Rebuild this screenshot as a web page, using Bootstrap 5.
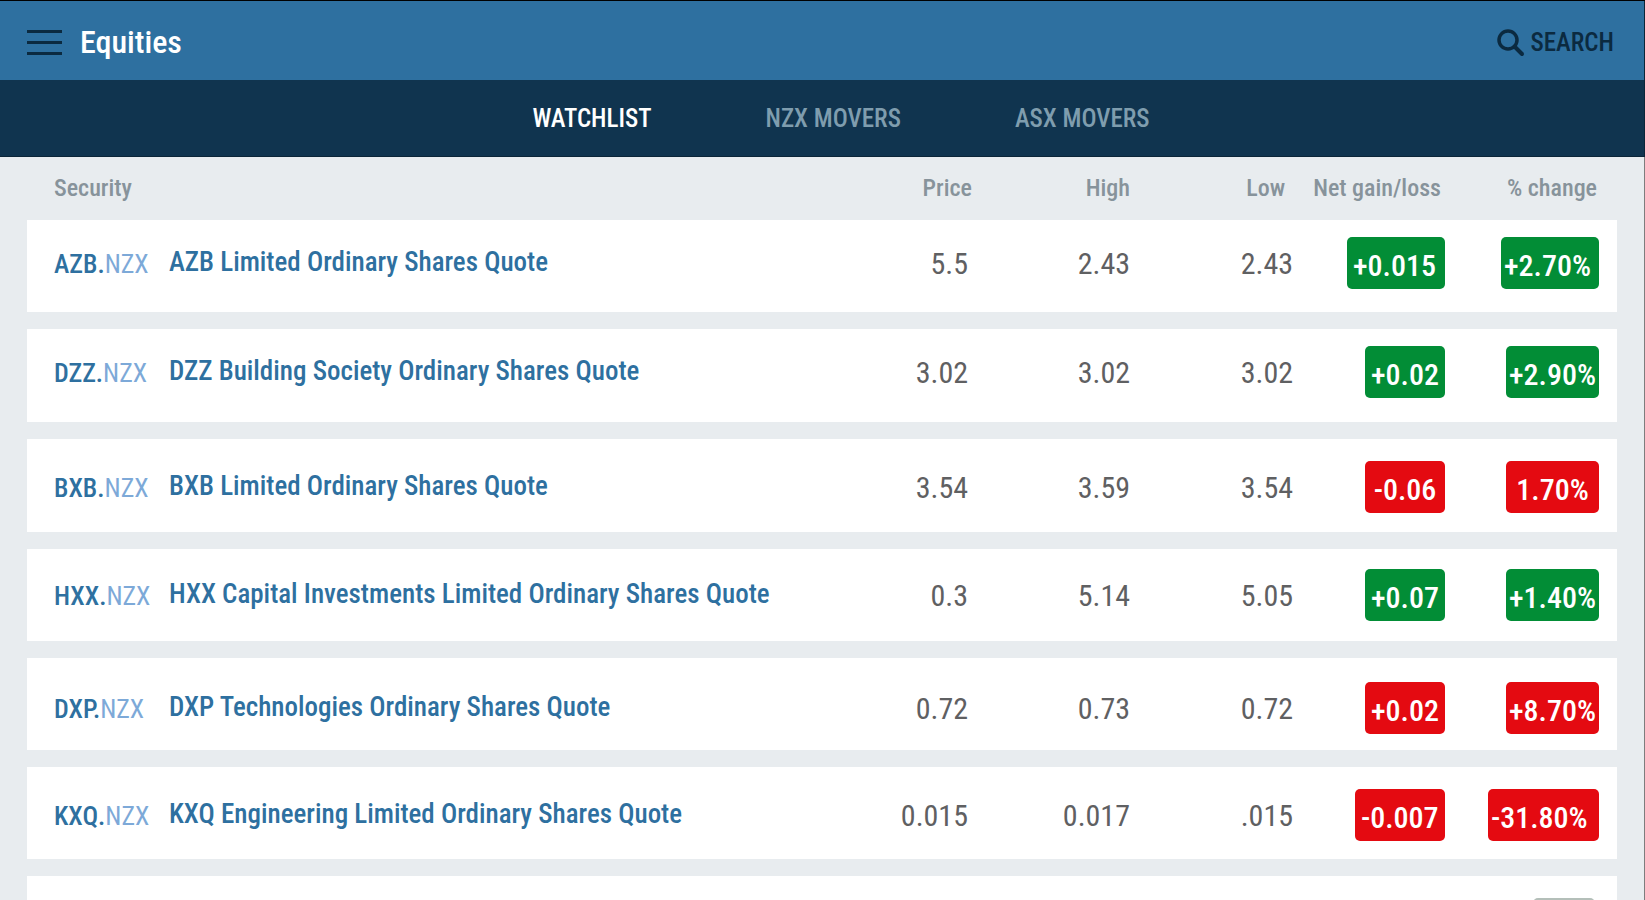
<!DOCTYPE html>
<html lang="en">
<head>
<meta charset="utf-8">
<meta name="viewport" content="width=device-width, initial-scale=1">
<title>Equities</title>
<link href="https://cdn.jsdelivr.net/npm/bootstrap@5.3.0/dist/css/bootstrap.min.css" rel="stylesheet">
<style>
  body {
    background: #e8ecef;
    border-top: 1px solid #000;
    font-family: "Roboto Condensed", "Roboto", "Liberation Sans", sans-serif;
    font-weight: 500;
  }

  /* Top bar */
  .app-bar { background: #2e70a0; height: 79px; padding: 5px 30px 0 27px; color: #0b2a40; border-right: 1px solid #0b2538; }
  .app-title { font-size: 32px; line-height: 36px; padding-bottom: 2px; font-weight: 500; color: #fff; }
  .bar-btn { color: inherit; font-size: 25px; line-height: 28px; font-weight: 500; gap: 6px; }
  .menu-btn { margin-right: 18px; }

  /* Tabs */
  .tab-bar { background: #10344f; height: 77px; gap: 114px; padding: 2px 0 0 38px; font-size: 25px; border-right: 1px solid #0b2538; border-bottom: 1px solid #0b2538; }
  .tab-bar .nav-link { color: #7f9dae; padding: 0; line-height: 28px; }
  .tab-bar .nav-link.active { color: #fff; }

  /* Quotes */
  .quotes { padding: 0 27px; border-right: 1px solid #7d7d7d; scrollbar-width: none; }
  .quote-table { width: 100%; table-layout: fixed; border-collapse: separate; border-spacing: 0 17px; color: #5f6062; }
  .quote-table th, .quote-table td { padding: 0; text-align: right; vertical-align: top; white-space: nowrap; }
  .quote-table th { font-size: 24px; line-height: 29px; font-weight: 500; color: #87939b; }
  .quote-table th:first-child, .quote-table td:first-child { padding-left: 27px; text-align: left; }
  .quote-table td:last-child { padding-right: 18px; }
  .quote-table th:last-child { padding-right: 20px; }
  .quote-table tbody tr { background: #fff; height: 92px; }
  .quote-table tbody tr:nth-child(2), .quote-table tbody tr:nth-child(3) { height: 93px; }
  .quote-table td { padding-top: 17px; font-size: 30px; line-height: 54px; font-weight: 400; }
  .quote-table .drop-sm td { padding-top: 20px; }
  .quote-table .drop-md td { padding-top: 22px; }
  .quote-table .drop-lg td { padding-top: 24px; }
  .col-high { width: 158px; }
  .col-low { width: 163px; }
  .col-net { width: 152px; }
  .col-pct { width: 172px; }
  .quote-table th.label-low { padding-right: 8px; }
  .quote-table td.price, .quote-table th.label-net { padding-right: 4px; }

  .security { gap: 16px; color: #2e70a0; text-decoration: none; font-weight: 500; }
  .ticker { width: 99px; font-size: 26px; line-height: 54px; font-weight: 400; }
  .ticker b { font-weight: 500; }
  .ticker span { color: #7da9d8; }
  .security-name { font-size: 27px; line-height: 50px; font-weight: 500; }

  .chip { display: inline-block; height: 52px; min-width: 80px; padding: 4px 0 0 6px; border-radius: 5px; line-height: 50px; font-weight: 500; color: #fff; text-align: left; vertical-align: top; }
  .chip-mid { min-width: 90px; }
  .chip-pct { min-width: 93px; padding-left: 3px; }
  .chip-wide { min-width: 98px; }
  .chip-xwide { min-width: 111px; }
  .chip-center { padding-left: 0; text-align: center; }
  .chip-up { background: #028d36; }
  .chip-down { background: #e40a11; }
  .chip-flat { background: #b4bfb9; min-width: 62px; margin-right: 4px; }
</style>
</head>
<body class="vh-100 overflow-hidden d-flex flex-column">
<header class="app-bar d-flex align-items-center justify-content-between flex-shrink-0">
  <div class="d-flex align-items-center">
    <button class="btn bar-btn menu-btn border-0 p-0 d-flex" type="button" aria-label="Menu">
      <svg width="35" height="26" viewBox="0 0 35 26" fill="currentColor" aria-hidden="true"><path d="M0 0h35v3H0zM0 11h35v3H0zM0 22h35v3H0z"/></svg>
    </button>
    <h1 class="app-title m-0">Equities</h1>
  </div>
  <button class="btn bar-btn border-0 p-0 d-flex align-items-center" type="button">
    <svg width="28" height="28" viewBox="0 0 28 28" fill="none" stroke="currentColor" aria-hidden="true"><circle cx="11" cy="11" r="9" stroke-width="3.500"/><path d="M17.500 17.500L25 25" stroke-width="4" stroke-linecap="round"/></svg>
    SEARCH
  </button>
</header>

<nav class="nav tab-bar justify-content-center align-items-center flex-shrink-0">
  <a class="nav-link active" href="#watchlist" aria-current="page">WATCHLIST</a>
  <a class="nav-link" href="#nzx">NZX MOVERS</a>
  <a class="nav-link" href="#asx">ASX MOVERS</a>
</nav>

<main class="quotes flex-fill overflow-auto">
  <table class="quote-table">
    <colgroup><col><col class="col-low"><col class="col-high"><col class="col-low"><col class="col-net"><col class="col-pct"></colgroup>
    <thead>
      <tr><th scope="col">Security</th><th scope="col">Price</th><th scope="col">High</th><th scope="col" class="label-low">Low</th><th scope="col" class="label-net">Net gain/loss</th><th scope="col">% change</th></tr>
    </thead>
    <tbody>
      <tr>
        <td><a class="security d-flex" href="#azb"><span class="ticker"><b>AZB.</b><span>NZX</span></span><span class="security-name">AZB Limited Ordinary Shares Quote</span></a></td>
        <td class="price">5.5</td><td>2.43</td><td>2.43</td>
        <td><span class="chip chip-wide chip-up">+0.015</span></td>
        <td><span class="chip chip-pct chip-wide chip-up">+2.70%</span></td>
      </tr>
      <tr>
        <td><a class="security d-flex" href="#dzz"><span class="ticker"><b>DZZ.</b><span>NZX</span></span><span class="security-name">DZZ Building Society Ordinary Shares Quote</span></a></td>
        <td class="price">3.02</td><td>3.02</td><td>3.02</td>
        <td><span class="chip chip-up">+0.02</span></td>
        <td><span class="chip chip-pct chip-up">+2.90%</span></td>
      </tr>
      <tr class="drop-md">
        <td><a class="security d-flex" href="#bxb"><span class="ticker"><b>BXB.</b><span>NZX</span></span><span class="security-name">BXB Limited Ordinary Shares Quote</span></a></td>
        <td class="price">3.54</td><td>3.59</td><td>3.54</td>
        <td><span class="chip chip-center chip-down">-0.06</span></td>
        <td><span class="chip chip-pct chip-center chip-down">1.70%</span></td>
      </tr>
      <tr class="drop-sm">
        <td><a class="security d-flex" href="#hxx"><span class="ticker"><b>HXX.</b><span>NZX</span></span><span class="security-name">HXX Capital Investments Limited Ordinary Shares Quote</span></a></td>
        <td class="price">0.3</td><td>5.14</td><td>5.05</td>
        <td><span class="chip chip-up">+0.07</span></td>
        <td><span class="chip chip-pct chip-up">+1.40%</span></td>
      </tr>
      <tr class="drop-lg">
        <td><a class="security d-flex" href="#dxp"><span class="ticker"><b>DXP.</b><span>NZX</span></span><span class="security-name">DXP Technologies Ordinary Shares Quote</span></a></td>
        <td class="price">0.72</td><td>0.73</td><td>0.72</td>
        <td><span class="chip chip-down">+0.02</span></td>
        <td><span class="chip chip-pct chip-down">+8.70%</span></td>
      </tr>
      <tr class="drop-md">
        <td><a class="security d-flex" href="#kxq"><span class="ticker"><b>KXQ.</b><span>NZX</span></span><span class="security-name">KXQ Engineering Limited Ordinary Shares Quote</span></a></td>
        <td class="price">0.015</td><td>0.017</td><td>.015</td>
        <td><span class="chip chip-mid chip-down">-0.007</span></td>
        <td><span class="chip chip-pct chip-xwide chip-down">-31.80%</span></td>
      </tr>
      <tr class="drop-md">
        <td></td><td></td><td></td><td></td><td></td>
        <td><span class="chip chip-flat"></span></td>
      </tr>
    </tbody>
  </table>
</main>
<script src="https://cdn.jsdelivr.net/npm/bootstrap@5.3.0/dist/js/bootstrap.bundle.min.js"></script>
</body>
</html>
